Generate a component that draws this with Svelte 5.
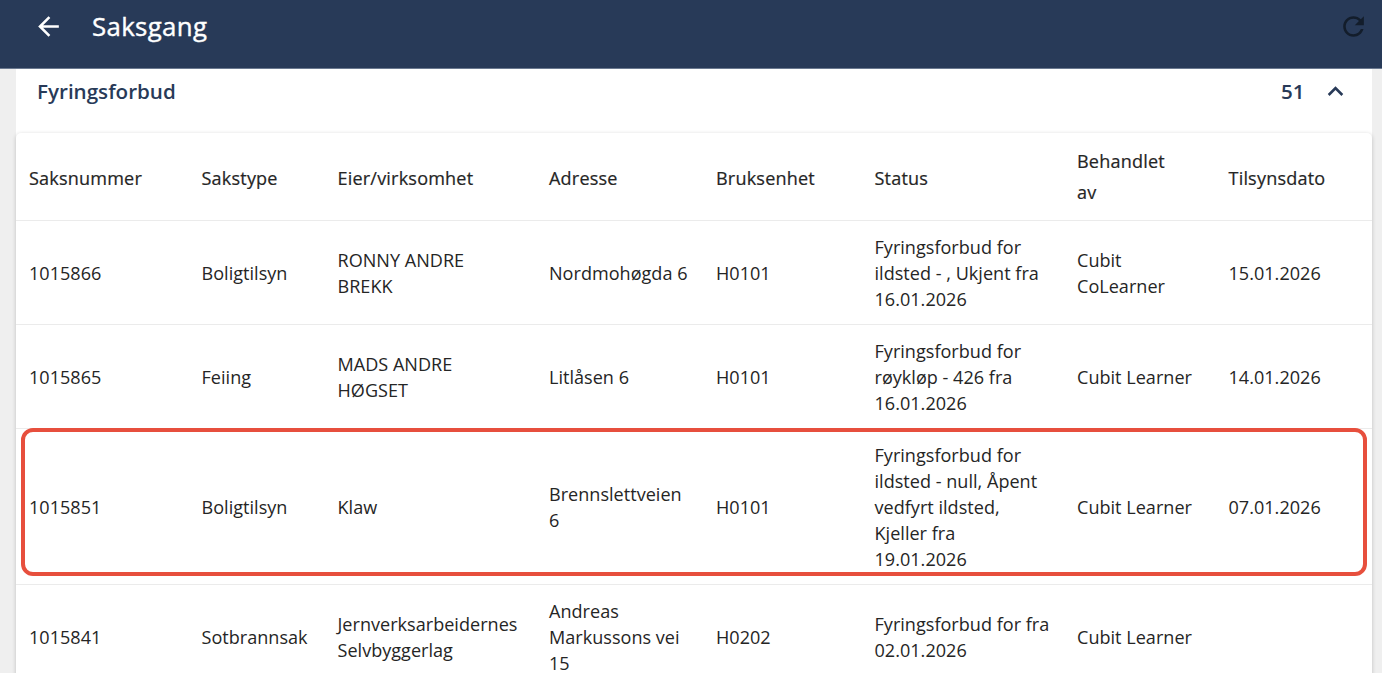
<script>
	const columns = ['Saksnummer', 'Sakstype', 'Eier/virksomhet', 'Adresse', 'Bruksenhet', 'Status', 'Behandlet av', 'Tilsynsdato'];

	const cases = [
		['1015866', 'Boligtilsyn', 'RONNY ANDRE BREKK', 'Nordmohøgda 6', 'H0101', 'Fyringsforbud for ildsted - , Ukjent fra 16.01.2026', 'Cubit CoLearner', '15.01.2026'],
		['1015865', 'Feiing', 'MADS ANDRE HØGSET', 'Litlåsen 6', 'H0101', 'Fyringsforbud for røykløp - 426 fra 16.01.2026', 'Cubit Learner', '14.01.2026'],
		['1015851', 'Boligtilsyn', 'Klaw', 'Brennslettveien 6', 'H0101', 'Fyringsforbud for ildsted - null, Åpent vedfyrt ildsted, Kjeller fra 19.01.2026', 'Cubit Learner', '07.01.2026'],
		['1015841', 'Sotbrannsak', 'Jernverksarbeidernes Selvbyggerlag', 'Andreas Markussons vei 15', 'H0202', 'Fyringsforbud for fra 02.01.2026', 'Cubit Learner', '']
	];

	let open = true;
	let marked = '1015851';
</script>

<div class="page">
	<header>
		<button class="back" aria-label="Tilbake">
			<svg width="31" height="31" viewBox="0 0 24 24"><path d="M20 11H7.83l5.59-5.59L12 4l-8 8 8 8 1.41-1.41L7.83 13H20v-2z" /></svg>
		</button>
		<h1>Saksgang</h1>
		<button class="refresh" aria-label="Oppdater">
			<svg width="31" height="31" viewBox="0 0 24 24"><path d="M17.65 6.35C16.2 4.9 14.21 4 12 4c-4.42 0-7.99 3.58-7.99 8s3.57 8 7.99 8c3.73 0 6.84-2.55 7.73-6h-2.08c-.82 2.33-3.04 4-5.65 4-3.31 0-6-2.69-6-6s2.69-6 6-6c1.66 0 3.14.69 4.22 1.78L13 11h7V4l-2.35 2.35z" /></svg>
		</button>
	</header>

	<section>
		<button class="summary" on:click={() => (open = !open)}>
			<span class="name">Fyringsforbud</span>
			<span class="count">51</span>
			<svg class:closed={!open} width="31" height="31" viewBox="0 0 24 24"><path d="M12 8l-6 6 1.41 1.41L12 10.83l4.59 4.58L18 14z" /></svg>
		</button>

		{#if open}
			<div class="card">
				<div class="row head">
					{#each columns as column}
						<div class="cell">{column}</div>
					{/each}
				</div>
				{#each cases as item}
					<div class="row" class:marked={item[0] === marked}>
						{#each item as value}
							<div class="cell">{value}</div>
						{/each}
					</div>
				{/each}
			</div>
		{/if}
	</section>
</div>

<style>
	:global(body) {
		background: #efefef;
		overflow: hidden;
	}

	.page {
		height: 673px;
		overflow: hidden;
		font-family: 'Open Sans', sans-serif;
		color: #252525;
	}

	button {
		padding: 0;
		border: none;
		background: none;
		font: inherit;
		color: inherit;
		cursor: pointer;
	}

	svg {
		display: block;
		fill: currentColor;
	}

	header {
		display: flex;
		align-items: center;
		height: 69px;
		padding: 0 13px 15px 33px;
		box-sizing: border-box;
		border-bottom: 1px solid #6b7990;
		background: #283a58;
		color: #fff;
	}

	h1 {
		flex: 1;
		margin: 0 0 2px 28px;
		font-size: 25.8px;
		font-weight: 500;
		line-height: 36px;
		letter-spacing: 0.35px;
		-webkit-text-stroke: 0.4px currentColor;
	}

	.refresh {
		color: #131d2b;
	}

	section {
		margin: 0 10px 0 16px;
		background: #fff;
	}

	.summary {
		display: flex;
		align-items: center;
		width: 100%;
		height: 64px;
		padding: 0 21px 20px;
		box-sizing: border-box;
		font-size: 20.6px;
		font-weight: 600;
		color: #283a58;
		text-align: left;
	}

	.summary .name {
		flex: 1;
		padding-bottom: 1px;
	}

	.count {
		padding-bottom: 1px;
	}

	.summary svg {
		margin-left: 15.5px;
	}

	.closed {
		transform: rotate(180deg);
	}

	.card {
		border-radius: 5px;
		background: #fff;
		box-shadow: 0 1px 4px rgba(0, 0, 0, 0.2);
	}

	.row {
		position: relative;
		display: grid;
		grid-template-columns: 172.5px 136px 211.5px 167px 158.5px 202.5px 151.5px 1fr;
		align-items: center;
		border-bottom: 1px solid #ebebeb;
	}

	.cell {
		padding: 14.4px 13px 11.3px;
		font-size: 18.06px;
		line-height: 25.82px;
		letter-spacing: 0.02px;
	}

	.head .cell {
		padding: 16px 34px 12px 13px;
		font-weight: 500;
		line-height: 30.9px;
		letter-spacing: 0.19px;
		-webkit-text-stroke: 0.2px currentColor;
	}

	/* the two-line heading fills the whole row height */
	.head .cell:nth-child(7) {
		padding-top: 13px;
	}

	.marked::after {
		content: '';
		position: absolute;
		inset: -1px 5px 8px;
		border: 4px solid #e74f3d;
		border-radius: 12px;
	}
</style>
